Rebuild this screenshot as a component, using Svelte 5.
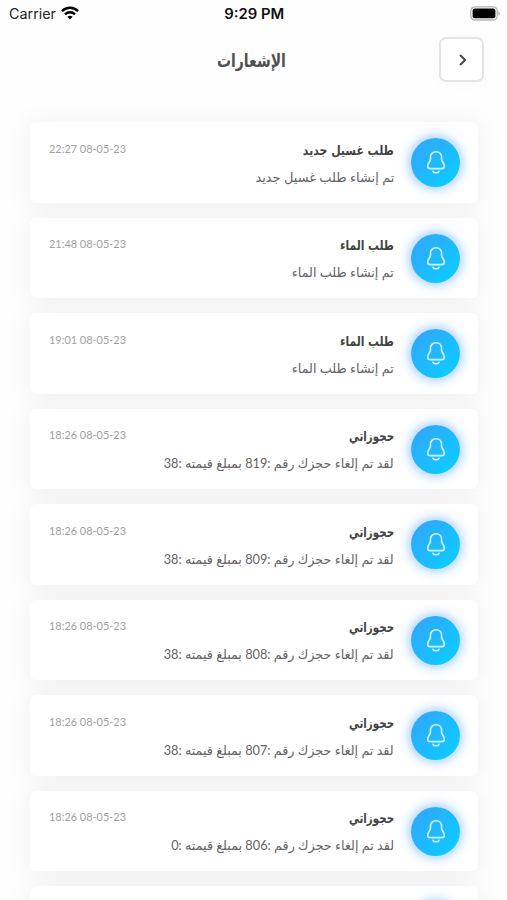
<script>
  const booking = (n, amount, w) => ({
    title: 'حجوزاتي', tw: 45, time: '18:26 08-05-23',
    text: `لقد تم إلغاء حجزك رقم :${n} بمبلغ قيمته :${amount}`, w
  });
  const items = [
    { title: 'طلب غسيل جديد', tw: 91, time: '22:27 08-05-23', text: 'تم إنشاء طلب غسيل جديد', w: 139 },
    { title: 'طلب الماء', tw: 54, time: '21:48 08-05-23', text: 'تم إنشاء طلب الماء', w: 102 },
    { title: 'طلب الماء', tw: 54, time: '19:01 08-05-23', text: 'تم إنشاء طلب الماء', w: 102 },
    booking(819, 38, 230),
    booking(809, 38, 230),
    booking(808, 38, 230),
    booking(807, 38, 230),
    booking(806, 0, 223),
    // The card below the fold: only its top edge is on screen.
    null
  ];

  // Condenses a line of text to the given width.
  function fit(node, width) {
    node.style.transform = `scaleX(${width / node.getBoundingClientRect().width})`;
  }
</script>

<div class="screen">
  <div class="status">
    <div class="carrier">
      <span use:fit={47}>Carrier</span>
      <svg width="18" height="14" viewBox="0 0 18 14" fill="none" stroke="#000" stroke-width="2.4">
        <path d="M1 5.1C5.5.7 12.5.7 17 5.1" />
        <path d="M4 8.3c2.8-2.7 7.2-2.7 10 0" />
        <path d="M6.4 10.8c1.5-1.4 3.7-1.4 5.2 0L9 13.5z" fill="#000" stroke="none" />
      </svg>
    </div>
    <div class="clock"><span use:fit={60}>9:29 PM</span></div>
    <svg class="battery" width="31" height="15" viewBox="0 0 31 15">
      <rect x=".8" y=".8" width="26.4" height="13.2" rx="4" fill="#fff" stroke="#b4b4b4" stroke-width="1.3" />
      <rect x="2.6" y="2.6" width="22.8" height="9.6" rx="2" fill="#000" />
      <path d="M28.4 5.2c2 .8 2 3.6 0 4.4z" fill="#aaa" />
    </svg>
  </div>

  <header>
    <h1><span use:fit={69}>الإشعارات</span></h1>
    <button aria-label="رجوع">
      <svg width="12" height="14" viewBox="0 0 12 14" fill="none" stroke="#444" stroke-width="1.9">
        <path d="M3.1 2l5 5-5 5" />
      </svg>
    </button>
  </header>

  <main>
    {#each items as item}
      <article>
        <time>{#if item}<span use:fit={77}>{item.time}</span>{/if}</time>
        <div class="copy">
          {#if item}
            <h2><span use:fit={item.tw}>{item.title}</span></h2>
            <p><span use:fit={item.w}>{item.text}</span></p>
          {/if}
        </div>
        <div class="badge">
          <svg width="20" height="25" viewBox="0 0 20 25" fill="none" stroke="#d4f3ff" stroke-width="1.6" stroke-linejoin="round" stroke-linecap="round">
            <path d="M10 1.7C6.6 1.7 4.4 4.200 4.400 7.500V9.500C4.400 12 1.700 12.800 1.700 15.900C1.700 17.600 2.600 18.600 4.300 18.600H15.700C17.400 18.600 18.300 17.600 18.300 15.900C18.300 12.800 15.600 12 15.600 9.500V7.500C15.600 4.200 13.400 1.700 10 1.700z" />
            <path d="M7 21.300c1 2 5 2 6 0" />
          </svg>
        </div>
      </article>
    {/each}
  </main>
</div>

<style>
  :global(body) { margin: 0; background: #fff; }
  .screen {
    position: relative;
    height: 900px;
    overflow: hidden;
    background: #fefefe;
    color: #444;
    font-family: "DejaVu Sans", sans-serif;
  }
  span { display: inline-block; white-space: nowrap; }
  .status {
    display: grid;
    grid-template-columns: 1fr auto 1fr;
    height: 27px;
    box-sizing: border-box;
    padding: 0 6px 0 9px;
    align-items: center;
    font-family: Inter, sans-serif;
    font-size: 14px;
    color: #222;
  }
  .carrier { display: flex; align-items: center; }
  .carrier span { transform-origin: left; }
  .carrier svg { margin-left: 6px; margin-top: -2px; }
  .clock { font-weight: 600; font-size: 14px; color: #111; margin-right: 2px; }
  .clock span { transform-origin: center; }
  .battery { justify-self: end; margin-top: -1px; }
  header {
    display: grid;
    grid-template-columns: 1fr 71px 1fr;
    align-items: center;
    height: 65px;
    padding: 0 23px 0 19px;
  }
  h1 { grid-column: 2; margin: 2px 0 0; font-size: 18px; line-height: 28px; font-weight: 700; color: #505050; display: flex; justify-content: center; }
  h1 span { transform-origin: center; }
  button {
    justify-self: end;
    width: 45px;
    height: 45px;
    padding: 0 0 0 3px;
    border: 2px solid #e4e4e4;
    border-radius: 7px;
    background: #fff;
    display: flex;
    align-items: center;
    justify-content: center;
    box-shadow: 0 2px 14px rgba(0, 0, 0, .025);
  }
  main {
    position: relative;
    z-index: 0;
    display: flex;
    flex-direction: column;
    gap: 15px;
    padding: 30px 29px 0 30px;
  }
  article {
    position: relative;
    display: flex;
    height: 80.5px;
    flex: none;
    box-sizing: border-box;
    padding: 0 18px 0 19px;
    background: #fff;
    border-radius: 7px;
  }
  article::before {
    content: "";
    position: absolute;
    inset: 0;
    z-index: -1;
    border-radius: 7px;
    box-shadow: 0 2px 26px 2px rgba(0, 0, 0, .06);
  }
  time { width: 77px; padding-top: 17.5px; font: 12px/18px Lato, sans-serif; color: #a0a0a0; direction: ltr; }
  time span { transform-origin: left; }
  .copy { flex: 1; direction: rtl; padding-top: 14.5px; margin-right: 17px; }
  h2, p { margin: 0; white-space: nowrap; }
  h2 { font-size: 13.5px; line-height: 26px; font-weight: 700; color: #444; }
  p { font-size: 13px; line-height: 26px; margin-top: 1px; color: #646464; font-family: Lato, "DejaVu Sans", sans-serif; }
  .copy span { transform-origin: right; }
  .badge {
    width: 49px;
    height: 49px;
    margin-top: 16px;
    border-radius: 50%;
    background: linear-gradient(135deg, #35a3fa, #08d0ff);
    box-shadow: 0 0 4px 4px rgba(90, 165, 255, .2), 0 0 9px 7px rgba(90, 165, 255, .15);
    display: flex;
    align-items: center;
    justify-content: center;
  }
</style>
